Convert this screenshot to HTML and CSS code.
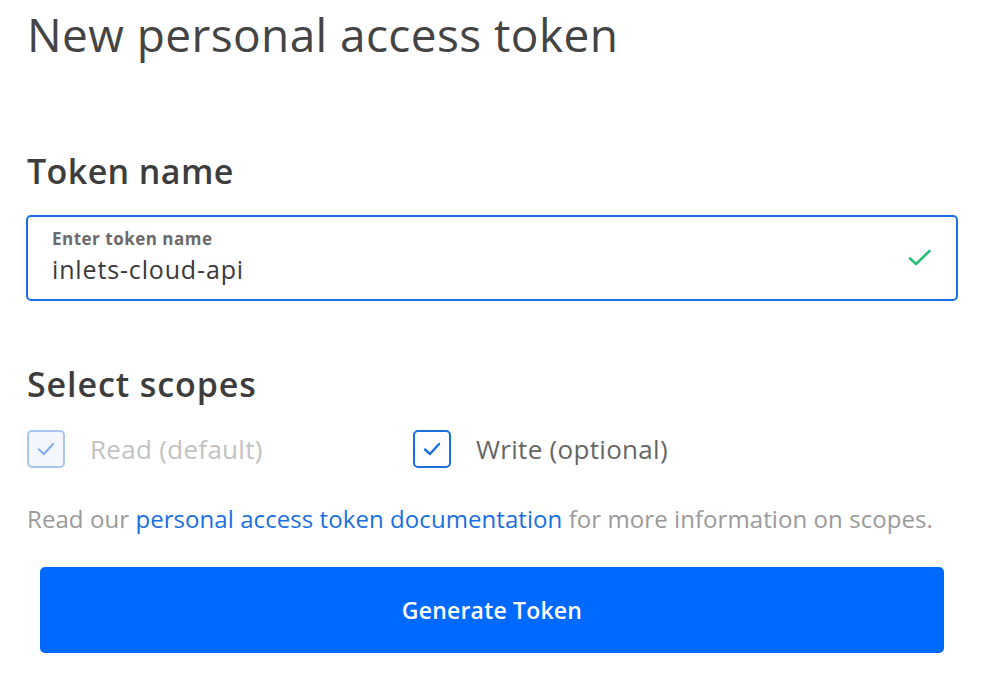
FILE: index.html
```html
<!DOCTYPE html>
<html lang="en">
<head>
<meta charset="utf-8">
<title>New personal access token</title>
<link rel="stylesheet" href="styles.css">
</head>
<body>
<main class="page">
  <h1 class="title">New personal access token</h1>

  <h2 class="section section-name">Token name</h2>
  <div class="field">
    <div class="field-text">
      <div class="field-label">Enter token name</div>
      <div class="field-value">inlets-cloud-api</div>
    </div>
    <svg class="field-check" width="24" height="18" viewBox="0 0 24 18" aria-hidden="true">
      <path d="M2 9.5 L8 15 L21.5 2" fill="none" stroke="#27c07a" stroke-width="2.6" stroke-linecap="round" stroke-linejoin="round"/>
    </svg>
  </div>

  <h2 class="section section-scopes">Select scopes</h2>
  <div class="scopes">
    <label class="scope scope-disabled">
      <span class="box">
        <svg width="20" height="16" viewBox="0 0 20 16" aria-hidden="true"><path d="M3 8.5 L8 13 L17 3" fill="none" stroke="currentColor" stroke-width="2.2" stroke-linecap="round" stroke-linejoin="round"/></svg>
      </span>
      <span class="scope-text">Read (default)</span>
    </label>
    <label class="scope scope-active">
      <span class="box">
        <svg width="20" height="16" viewBox="0 0 20 16" aria-hidden="true"><path d="M3 8.5 L8 13 L17 3" fill="none" stroke="currentColor" stroke-width="2.4" stroke-linecap="round" stroke-linejoin="round"/></svg>
      </span>
      <span class="scope-text">Write (optional)</span>
    </label>
  </div>

  <p class="info">Read our <a class="link" href="#">personal access token documentation</a> for more information on scopes.</p>

  <button class="generate" type="button">Generate Token</button>
</main>
</body>
</html>
```

FILE: styles.css
```css
* { box-sizing: border-box; }

html, body {
  margin: 0;
  padding: 0;
  background: #ffffff;
}

body {
  font-family: "Open Sans", "Lato", sans-serif;
  color: #444444;
}

.page {
  padding: 6px 38px 0 26px;
}

.title {
  margin: 0;
  font-size: 46px;
  line-height: 56px;
  font-weight: 400;
  letter-spacing: 0.4px;
  color: #444444;
  padding-left: 1px;
}

.section {
  margin: 0;
  font-size: 34px;
  line-height: 40px;
  font-weight: 600;
  letter-spacing: 0.4px;
  color: #3d3d3d;
  padding-left: 1px;
}

.section-name { margin-top: 89px; }
.section-scopes {
  margin-top: 63px;
  letter-spacing: 0.9px;
}

.field {
  margin-top: 24px;
  height: 86px;
  border: 2px solid #1a6fe0;
  border-radius: 5px;
  display: flex;
  align-items: flex-start;
  justify-content: space-between;
  padding: 12px 24px 0 24px;
}

.field-label {
  font-size: 17px;
  line-height: 20px;
  font-weight: 700;
  letter-spacing: 0.5px;
  color: #6a6a6a;
}

.field-value {
  margin-top: 5px;
  font-size: 25px;
  line-height: 30px;
  letter-spacing: 0.85px;
  color: #3a3a3a;
}

.field-check {
  margin-top: 20px;
}

.scopes {
  margin-top: 26px;
  display: grid;
  grid-template-columns: 387px auto;
  align-items: center;
}

.scope {
  display: flex;
  align-items: center;
  gap: 25px;
}

.box {
  width: 38px;
  height: 38px;
  border-radius: 5px;
  display: flex;
  align-items: center;
  justify-content: center;
}

.scope-disabled .box {
  border: 2px solid #a9c7f2;
  background: #f3f7fd;
  color: #85adec;
  margin-left: 1px;
}

.scope-active .box {
  border: 2px solid #1a6fe0;
  background: #ffffff;
  color: #1a6fe0;
}

.scope-text {
  font-size: 26px;
  line-height: 32px;
  letter-spacing: 0.3px;
}

.scope-disabled .scope-text { color: #c2c2c2; }
.scope-active .scope-text { color: #666666; }

.info {
  margin: 37px 0 0 1px;
  font-size: 24px;
  line-height: 28px;
  letter-spacing: 0.07px;
  color: #9a9a9a;
}

.link {
  color: #1a6fe0;
  text-decoration: none;
}

.generate {
  display: block;
  margin: 34px 14px 0 14px;
  width: calc(100% - 28px);
  height: 86px;
  border: none;
  border-radius: 5px;
  background: #0069ff;
  color: #ffffff;
  font-family: "Open Sans", "Lato", sans-serif;
  font-size: 23px;
  font-weight: 600;
  letter-spacing: 0.2px;
}
```
